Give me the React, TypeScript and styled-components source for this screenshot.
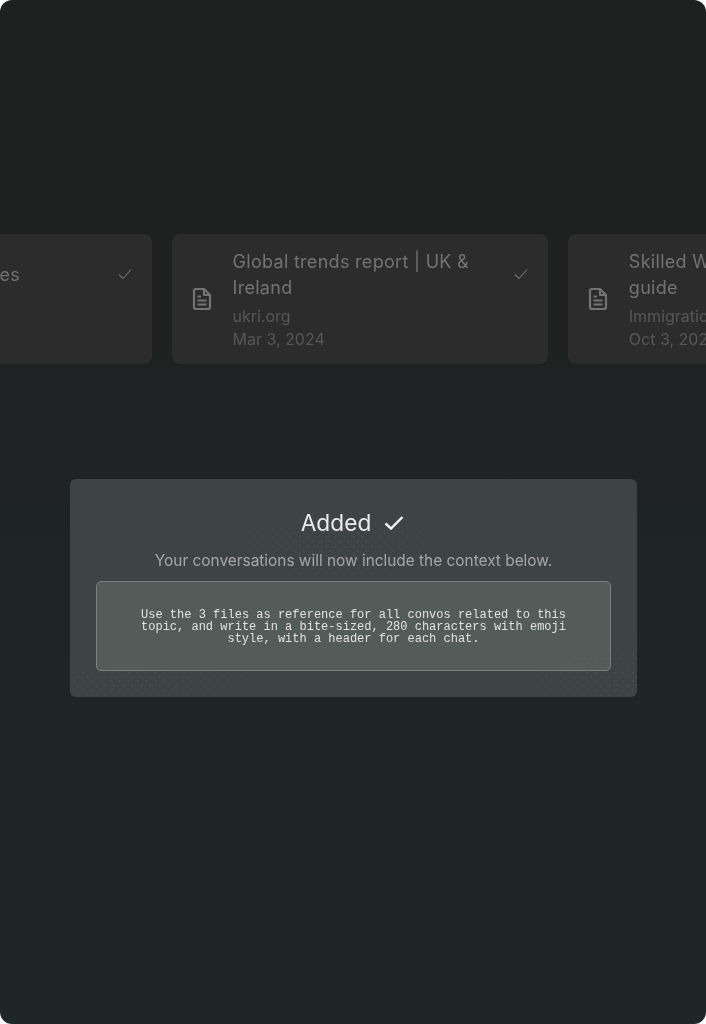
import React from 'react';
import styled, { createGlobalStyle } from 'styled-components';

const Global = createGlobalStyle`
  html, body { margin: 0; padding: 0; background: #ffffff; }
  body { font-family: Inter, "Liberation Sans", sans-serif; }
`;

const Page = styled.main`
  width: 706px;
  height: 1024px;
  border-radius: 12px;
  overflow: hidden;
  background: linear-gradient(180deg, #1f2020 0%, #1f2020 25%, #1f2626 70%, #1f2726 100%);
  display: flex;
  flex-direction: column;
`;

const Track = styled.section`
  display: flex;
  gap: 20px;
  margin: 234px 0 0 -224.3px;
  width: 1170px;
`;

const Card = styled.article`
  flex: 0 0 376.3px;
  height: 130px;
  box-sizing: border-box;
  border-radius: 8px;
  background: #2c2c2c;
  display: flex;
  align-items: center;
  padding: 0 20px;
  gap: 20.5px;
  position: relative;
`;

const DocIcon = styled.svg`
  flex: none;
  width: 20px;
  height: 24px;
  color: #727372;
`;

const CardText = styled.div<{ $single: boolean }>`
  flex: 1;
  min-width: 0;
  padding-right: 44px;
  filter: grayscale(1);
  align-self: ${(p) => (p.$single ? 'flex-start' : 'center')};
  margin-top: ${(p) => (p.$single ? '27px' : '0')};
`;

const CardTitle = styled.h3`
  margin: 0;
  padding-top: 1px;
  font-size: 18px;
  line-height: 26px;
  font-weight: 400;
  letter-spacing: 0.3px;
  color: #727372;
`;

const CardMeta = styled.p`
  margin: 0;
  font-size: 16px;
  line-height: 23px;
  font-weight: 400;
  color: #555756;
  white-space: nowrap;
`;

const CardMetaFirst = styled(CardMeta)`
  margin-top: 4px;
`;

const Tick = styled.svg`
  position: absolute;
  top: 33px;
  right: 20px;
  width: 14px;
  height: 14px;
  color: #707170;
`;

const Modal = styled.section`
  position: relative;
  margin: 115px 0 0 70px;
  width: 567px;
  height: 218px;
  box-sizing: border-box;
  border-radius: 6px;
  background: #3d4443;
  padding: 26px 26px;
  display: flex;
  flex-direction: column;
  align-items: center;
  overflow: hidden;
`;

const Dots = styled.div<{ $mask: string; $alpha: number }>`
  position: absolute;
  inset: 0;
  pointer-events: none;
  background-image:
    radial-gradient(circle at center, rgba(255, 255, 255, ${(p) => p.$alpha}) 0.7px, transparent 0.8px),
    radial-gradient(circle at center, rgba(255, 255, 255, ${(p) => p.$alpha}) 0.7px, transparent 0.8px);
  background-size: 9px 9px;
  background-position: 0 0, 4px 4px;
  mask-image: ${(p) => p.$mask};
`;

const Heading = styled.h2`
  margin: 0;
  padding-right: 2px;
  position: relative;
  display: flex;
  align-items: center;
  gap: 13px;
  font-size: 22.7px;
  line-height: 36px;
  font-weight: 400;
  color: #e8eaea;
  filter: grayscale(1);
`;

const HeadingTick = styled.svg`
  width: 20px;
  height: 16px;
  color: #f0f2f1;
`;

const Subtitle = styled.p`
  margin: 10px 0 0;
  position: relative;
  font-size: 15.4px;
  line-height: 20px;
  color: #a3a7a6;
  filter: grayscale(1);
`;

const Prompt = styled.div`
  position: relative;
  margin-top: 10px;
  width: 515px;
  height: 90px;
  box-sizing: border-box;
  border: 1px solid #7a807f;
  border-radius: 5px;
  background: #545c5a;
  display: flex;
  align-items: center;
  justify-content: center;
  padding: 2px 44px 0;
`;

const PromptText = styled.p`
  margin: 0;
  text-align: center;
  font-family: "Liberation Mono", monospace;
  font-size: 12px;
  line-height: 12px;
  color: #dfe2e1;
  filter: grayscale(1);
`;

const FileGlyph = () => (
  <DocIcon viewBox="0 0 20 24" fill="none" stroke="currentColor" strokeWidth="2.2" strokeLinejoin="round">
    <path d="M12 2H4a2 2 0 0 0-2 2v16a2 2 0 0 0 2 2h12a2 2 0 0 0 2-2V8z" />
    <path d="M12 2v6h6" />
    <path d="M5.5 9.5h3.5M5.5 13.5h9M5.5 17.5h9" strokeWidth="1.9" />
  </DocIcon>
);

const SmallTick = () => (
  <Tick viewBox="0 0 14 14" fill="none" stroke="currentColor" strokeWidth="1.1">
    <path d="M1 7.5 5 11.5 13 2.5" />
  </Tick>
);

const cards = [
  { title: 'Corporate guidelines', source: '', date: '' },
  { title: 'Global trends report | UK & Ireland', source: 'ukri.org', date: 'Mar 3, 2024' },
  { title: 'Skilled Worker visa: rules guide', source: 'Immigration Office', date: 'Oct 3, 2024' },
];

export default function App() {
  return (
    <Page>
      <Global />
      <Track>
        {cards.map((c) => (
          <Card key={c.title}>
            <FileGlyph />
            <CardText $single={!c.source}>
              <CardTitle>{c.title}</CardTitle>
              {c.source && <CardMetaFirst>{c.source}</CardMetaFirst>}
              {c.date && <CardMeta>{c.date}</CardMeta>}
            </CardText>
            <SmallTick />
          </Card>
        ))}
      </Track>
      <Modal>
        <Dots $alpha={0.16} $mask="radial-gradient(ellipse 130px 42px at 266px 66px, #000 0%, transparent 100%)" />
        <Heading>
          Added
          <HeadingTick viewBox="0 0 20 16" fill="none" stroke="currentColor" strokeWidth="2.4">
            <path d="M1.5 8.5 7 13.5 18.5 2" />
          </HeadingTick>
        </Heading>
        <Subtitle>Your conversations will now include the context below.</Subtitle>
        <Prompt>
          <PromptText>
            Use the 3 files as reference for all convos related to this topic, and write in a bite-sized, 280 characters with emoji style, with a header for each chat.
          </PromptText>
        </Prompt>
        <Dots $alpha={0.14} $mask="radial-gradient(ellipse 175px 28px at 60px 205px, #000 0%, transparent 100%), radial-gradient(ellipse 130px 50px at 555px 205px, #000 0%, transparent 100%)" />
      </Modal>
    </Page>
  );
}
